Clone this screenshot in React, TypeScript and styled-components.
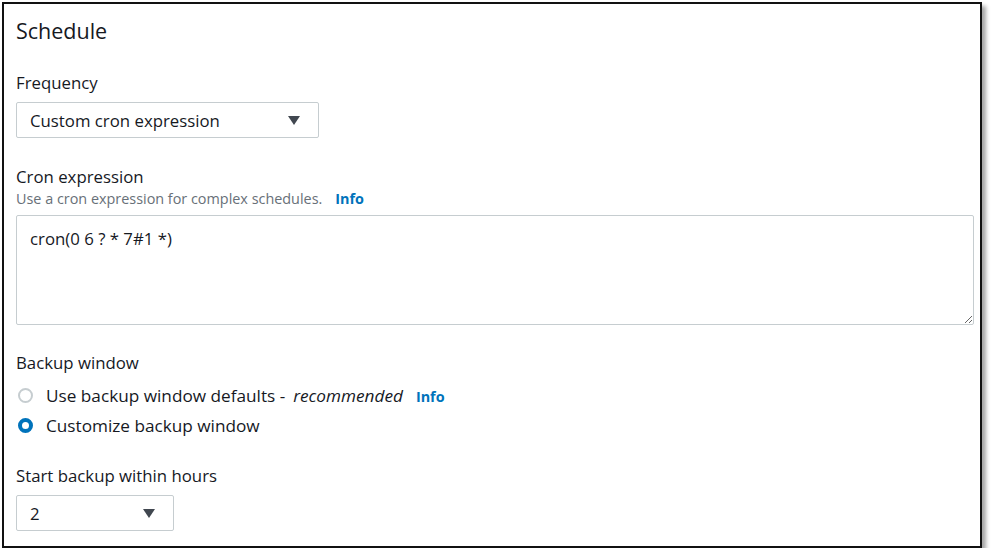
import React from 'react';
import styled, { createGlobalStyle } from 'styled-components';

const GlobalStyle = createGlobalStyle`
  html, body {
    margin: 0;
    padding: 0;
    background: #ffffff;
  }
  body {
    font-family: 'Open Sans', 'Liberation Sans', Arial, sans-serif;
    color: #16191f;
  }
`;

const Frame = styled.div`
  box-sizing: border-box;
  margin: 2px 0 0 2px;
  width: 980px;
  height: 546px;
  border: 2px solid #111111;
  box-shadow: 4px 4px 4px rgba(0, 0, 0, 0.35);
  padding: 13px 6px 0 12px;
  display: flex;
  flex-direction: column;
`;

const Heading = styled.h2`
  margin: 0;
  font-size: 21.5px;
  line-height: 28px;
  font-weight: 400;
`;

const Field = styled.div<{ $top: number }>`
  display: flex;
  flex-direction: column;
  margin-top: ${(p) => p.$top}px;
`;

const Label = styled.div`
  font-size: 16.8px;
  line-height: 22px;
`;

const Description = styled.div`
  font-size: 14.4px;
  line-height: 19px;
  margin-top: 1px;
  color: #687078;
`;

const InfoLink = styled.span`
  color: #0073bb;
  font-weight: 700;
  font-size: 14.4px;
  margin-left: 13px;
`;

const SelectBox = styled.div<{ $width: number }>`
  box-sizing: border-box;
  margin-top: 8px;
  width: ${(p) => p.$width}px;
  height: 36px;
  border: 1px solid #c6cdd0;
  border-radius: 2px;
  display: flex;
  align-items: center;
  justify-content: space-between;
  padding: 0 18px 0 13px;
  font-size: 16.8px;
`;

const TextArea = styled.textarea`
  box-sizing: border-box;
  margin-top: 7px;
  width: 958px;
  height: 110px;
  border: 1px solid #c6cdd0;
  border-radius: 2px;
  padding: 11px 13px;
  font-family: inherit;
  font-size: 16.8px;
  color: #16191f;
  outline: none;
`;

const RadioList = styled.div`
  display: flex;
  flex-direction: column;
  margin-top: 6px;
`;

const RadioRow = styled.div`
  height: 30px;
  display: flex;
  align-items: center;
  gap: 13px;
  padding-left: 2px;
  font-size: 17.2px;
`;

const RadioDot = styled.span<{ $checked?: boolean }>`
  box-sizing: border-box;
  width: 15px;
  height: 15px;
  border-radius: 50%;
  border: ${(p) => (p.$checked ? '4px solid #0073bb' : '2px solid #c6cdd0')};
  background: #ffffff;
`;

const Muted = styled.em`
  font-style: italic;
  margin-left: 8px;
`;

function Caret() {
  return (
    <svg width="12" height="9" viewBox="0 0 12 9">
      <polygon points="0,0 12,0 6,9" fill="#414750" />
    </svg>
  );
}

export default function App() {
  return (
    <>
      <GlobalStyle />
      <Frame>
        <Heading>Schedule</Heading>

        <Field $top={27}>
          <Label>Frequency</Label>
          <SelectBox $width={303}>
            <span>Custom cron expression</span>
            <Caret />
          </SelectBox>
        </Field>

        <Field $top={28}>
          <Label>Cron expression</Label>
          <Description>
            Use a cron expression for complex schedules.
            <InfoLink>Info</InfoLink>
          </Description>
          <TextArea defaultValue="cron(0 6 ? * 7#1 *)" spellCheck={false} />
        </Field>

        <Field $top={27}>
          <Label>Backup window</Label>
          <RadioList>
            <RadioRow>
              <RadioDot />
              <span>
                Use backup window defaults -<Muted>recommended</Muted>
                <InfoLink>Info</InfoLink>
              </span>
            </RadioRow>
            <RadioRow>
              <RadioDot $checked />
              <span>Customize backup window</span>
            </RadioRow>
          </RadioList>
        </Field>

        <Field $top={25}>
          <Label>Start backup within hours</Label>
          <SelectBox $width={158}>
            <span>2</span>
            <Caret />
          </SelectBox>
        </Field>
      </Frame>
    </>
  );
}
